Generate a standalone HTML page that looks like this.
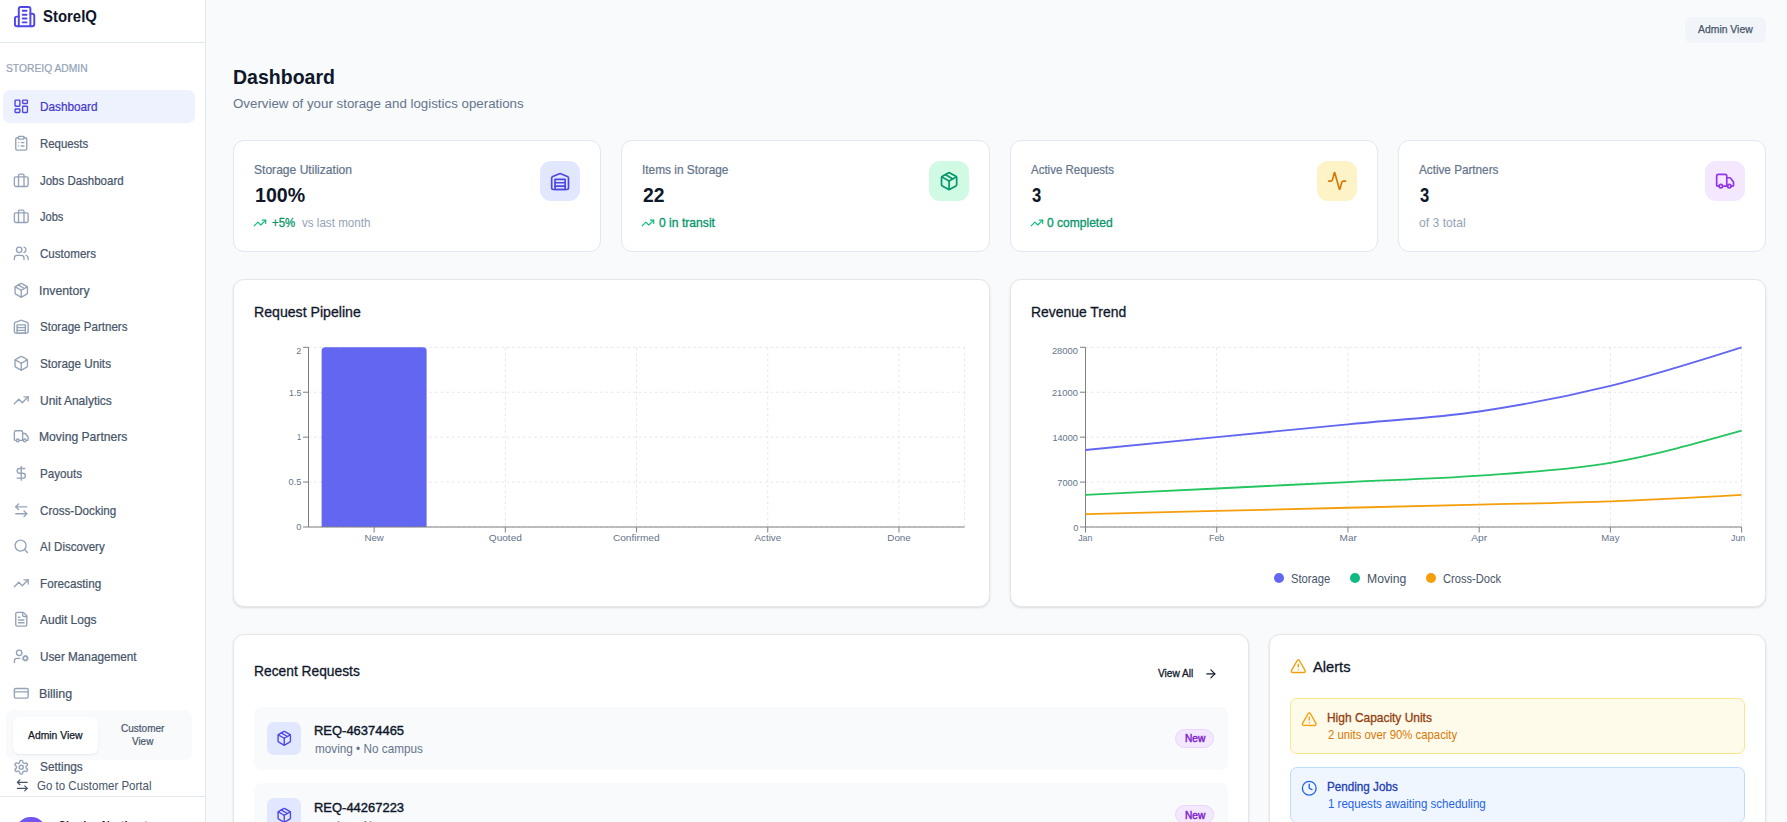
<!DOCTYPE html>
<html lang="en"><head><meta charset="utf-8"><title>StoreIQ - Dashboard</title>
<style>
*{box-sizing:content-box;margin:0;padding:0}
html,body{width:1787px;height:822px;overflow:hidden;background:#f8fafc;font-family:"Liberation Sans", sans-serif;}
body{position:relative}
.t{position:absolute;white-space:nowrap;line-height:1;display:block;transform-origin:0 50%;font-weight:400}
.ic{position:absolute;display:block;overflow:visible}
a{text-decoration:none;color:inherit}
button{border:0;background:none;font:inherit}
h1,h3,p{font:inherit}
ul{list-style:none}
.sb{position:absolute;left:0;top:0;height:822px;background:#fff;border-right:1px solid #e2e8f0;overflow:hidden;box-sizing:border-box}
.sbhead{position:absolute;left:0;top:0;width:100%;border-bottom:1px solid #e2e8f0}
.ni{position:absolute;display:block;border-radius:7px}
.ni.act{background:#eef2ff}
.switch{position:absolute;background:#f8fafc;border-radius:8px}
.switch button{position:absolute;border-radius:6px;display:block}
.swa{background:#fff;box-shadow:0 1px 2px rgba(15,23,42,.08)}
.sbfoot{position:absolute;left:0;border-top:1px solid #e2e8f0;height:60px}
.avatar{position:absolute;width:29.3px;height:29.3px;border-radius:50%;background:linear-gradient(135deg,#6366f1,#9333ea)}
main{position:absolute;left:0;top:0;width:1787px;height:822px}
.badge{position:absolute;background:#f1f5f9;border-radius:6px}
.card{position:absolute;background:#fff;border:1px solid #e2e8f0;border-radius:11px}
.card.sh{border-color:#e5e7ea;box-shadow:0 1px 2px rgba(0,0,0,.07),0 1px 3px rgba(0,0,0,.06)}
.ib{position:absolute;width:40px;height:40px;border-radius:11px}
.chart{position:absolute;left:0;top:0;display:block}
.dot{position:absolute;width:10.2px;height:10.2px;border-radius:50%;display:block}
.row{position:absolute;background:#f8fafc;border-radius:7px}
.rib{position:absolute;width:33.9px;height:33.1px;border-radius:7px;background:#e0e7ff}
.pill{position:absolute;border:1px solid #e9d5ff;background:#f3e8ff;border-radius:10px;display:block}
.alert{position:absolute;border-radius:7px;border:1px solid}
.alert.amber{background:#fffbeb;border-color:#fde68a}
.alert.blue{background:#eff6ff;border-color:#bfdbfe}
</style></head>
<body>
<main>
<div class="badge" style="left:1684.8px;top:16.9px;width:81.2px;height:25.8px"><span class="t" style="left:13.60px;top:7.14px;font-size:10.7px;color:#475569;transform:scaleX(0.9732);-webkit-text-stroke:0.25px #475569;">Admin View</span></div><h1><span class="t" style="left:233.21px;top:68.04px;font-size:19.8px;color:#0f172a;transform:scaleX(0.9868);font-weight:700;">Dashboard</span></h1><p><span class="t" style="left:233.40px;top:98.04px;font-size:12.5px;color:#64748b;transform:scaleX(1.0645);">Overview of your storage and logistics operations</span></p>
<section class="stats">
<div class="card" style="left:233px;top:140px;width:366px;height:110px">
<span class="t" style="left:20.10px;top:23.04px;font-size:12.4px;color:#64748b;transform:scaleX(0.9745);-webkit-text-stroke:0.22px #64748b;">Storage Utilization</span>
<span class="t" style="left:20.81px;top:45.04px;font-size:19.8px;color:#0f172a;transform:scaleX(0.9899);font-weight:700;">100%</span>
<svg class="ic" style="left:19.25px;top:74.75px" width="13.9" height="13.9" viewBox="0 0 24 24" fill="none" stroke="#10b981" stroke-width="2" stroke-linecap="round" stroke-linejoin="round"><polyline points="22 7 13.5 15.5 8.5 10.5 2 17"/><polyline points="16 7 22 7 22 13"/></svg>
<span class="t" style="left:37.90px;top:76.04px;font-size:12.4px;color:#059669;transform:scaleX(0.9193);-webkit-text-stroke:0.3px #059669;">+5%</span>
<span class="t" style="left:68.00px;top:76.04px;font-size:12.4px;color:#94a3b8;transform:scaleX(0.9370);">vs last month</span>
<div class="ib" style="left:306.00px;top:20.00px;background:#e0e7ff"><svg class="ic" style="left:9.90px;top:9.90px" width="20.2" height="20.2" viewBox="0 0 24 24" fill="none" stroke="#4f46e5" stroke-width="2" stroke-linecap="round" stroke-linejoin="round"><path d="M22 8.35V20a2 2 0 0 1-2 2H4a2 2 0 0 1-2-2V8.35A2 2 0 0 1 3.26 6.5l8-3.2a2 2 0 0 1 1.48 0l8 3.2A2 2 0 0 1 22 8.35Z"/><path d="M6 18h12"/><path d="M6 14h12"/><rect width="12" height="12" x="6" y="10"/></svg></div>
</div>
<div class="card" style="left:621px;top:140px;width:367px;height:110px">
<span class="t" style="left:19.94px;top:23.04px;font-size:12.4px;color:#64748b;transform:scaleX(0.9583);-webkit-text-stroke:0.22px #64748b;">Items in Storage</span>
<span class="t" style="left:20.90px;top:45.04px;font-size:19.8px;color:#0f172a;transform:scaleX(0.9772);font-weight:700;">22</span>
<svg class="ic" style="left:19.45px;top:74.75px" width="13.9" height="13.9" viewBox="0 0 24 24" fill="none" stroke="#10b981" stroke-width="2" stroke-linecap="round" stroke-linejoin="round"><polyline points="22 7 13.5 15.5 8.5 10.5 2 17"/><polyline points="16 7 22 7 22 13"/></svg>
<span class="t" style="left:37.10px;top:76.04px;font-size:12.4px;color:#059669;transform:scaleX(0.9789);-webkit-text-stroke:0.3px #059669;">0 in transit</span>
<div class="ib" style="left:307.00px;top:20.00px;background:#d1fae5"><svg class="ic" style="left:9.90px;top:9.90px" width="20.2" height="20.2" viewBox="0 0 24 24" fill="none" stroke="#059669" stroke-width="2" stroke-linecap="round" stroke-linejoin="round"><path d="m7.5 4.27 9 5.15"/><path d="M21 8a2 2 0 0 0-1-1.73l-7-4a2 2 0 0 0-2 0l-7 4A2 2 0 0 0 3 8v8a2 2 0 0 0 1 1.73l7 4a2 2 0 0 0 2 0l7-4A2 2 0 0 0 21 16Z"/><path d="m3.3 7 8.7 5 8.7-5"/><path d="M12 22V12"/></svg></div>
</div>
<div class="card" style="left:1010px;top:140px;width:366px;height:110px">
<span class="t" style="left:20.20px;top:23.04px;font-size:12.4px;color:#64748b;transform:scaleX(0.9269);-webkit-text-stroke:0.22px #64748b;">Active Requests</span>
<span class="t" style="left:20.75px;top:45.04px;font-size:19.8px;color:#0f172a;transform:scaleX(0.8409);font-weight:700;">3</span>
<svg class="ic" style="left:19.25px;top:74.75px" width="13.9" height="13.9" viewBox="0 0 24 24" fill="none" stroke="#10b981" stroke-width="2" stroke-linecap="round" stroke-linejoin="round"><polyline points="22 7 13.5 15.5 8.5 10.5 2 17"/><polyline points="16 7 22 7 22 13"/></svg>
<span class="t" style="left:36.40px;top:76.04px;font-size:12.4px;color:#059669;transform:scaleX(0.9717);-webkit-text-stroke:0.3px #059669;">0 completed</span>
<div class="ib" style="left:306.00px;top:20.00px;background:#fef3c7"><svg class="ic" style="left:9.90px;top:9.90px" width="20.2" height="20.2" viewBox="0 0 24 24" fill="none" stroke="#d97706" stroke-width="2" stroke-linecap="round" stroke-linejoin="round"><path d="M22 12h-2.48a2 2 0 0 0-1.93 1.46l-2.35 8.36a.25.25 0 0 1-.48 0L9.24 2.18a.25.25 0 0 0-.48 0l-2.35 8.36A2 2 0 0 1 4.49 12H2"/></svg></div>
</div>
<div class="card" style="left:1398px;top:140px;width:366px;height:110px">
<span class="t" style="left:20.20px;top:23.04px;font-size:12.4px;color:#64748b;transform:scaleX(0.9449);-webkit-text-stroke:0.22px #64748b;">Active Partners</span>
<span class="t" style="left:20.75px;top:45.04px;font-size:19.8px;color:#0f172a;transform:scaleX(0.8409);font-weight:700;">3</span>
<span class="t" style="left:20.40px;top:76.04px;font-size:12.4px;color:#94a3b8;transform:scaleX(0.9813);">of 3 total</span>
<div class="ib" style="left:306.00px;top:20.00px;background:#f3e8ff"><svg class="ic" style="left:9.90px;top:9.90px" width="20.2" height="20.2" viewBox="0 0 24 24" fill="none" stroke="#9333ea" stroke-width="2" stroke-linecap="round" stroke-linejoin="round"><path d="M14 18V6a2 2 0 0 0-2-2H4a2 2 0 0 0-2 2v11a1 1 0 0 0 1 1h2"/><path d="M15 18H9"/><path d="M19 18h2a1 1 0 0 0 1-1v-3.65a1 1 0 0 0-.22-.624l-3.48-4.35A1 1 0 0 0 17.52 8H14"/><circle cx="17" cy="18" r="2"/><circle cx="7" cy="18" r="2"/></svg></div>
</div>
</section>
<section class="charts">
<div class="card sh" style="left:233px;top:279px;width:755px;height:326px"><h3><span class="t" style="left:20.12px;top:25.04px;font-size:14.4px;color:#0f172a;transform:scaleX(0.9815);-webkit-text-stroke:0.3px #0f172a;">Request Pipeline</span></h3><svg class="chart" width="755" height="326" viewBox="234 280 755 326" font-family='"Liberation Sans", sans-serif'>
<g stroke="#e2e8f0" stroke-width="1" stroke-dasharray="2.75 2.75" fill="none">
<line x1="308.5" x2="964.6" y1="527.00" y2="527.00"/>
<line x1="308.5" x2="964.6" y1="482.07" y2="482.07"/>
<line x1="308.5" x2="964.6" y1="437.15" y2="437.15"/>
<line x1="308.5" x2="964.6" y1="392.23" y2="392.23"/>
<line x1="308.5" x2="964.6" y1="347.30" y2="347.30"/>
<line x1="308.50" x2="308.50" y1="347.3" y2="527.0"/>
<line x1="374.11" x2="374.11" y1="347.3" y2="527.0"/>
<line x1="505.33" x2="505.33" y1="347.3" y2="527.0"/>
<line x1="636.55" x2="636.55" y1="347.3" y2="527.0"/>
<line x1="767.77" x2="767.77" y1="347.3" y2="527.0"/>
<line x1="898.99" x2="898.99" y1="347.3" y2="527.0"/>
<line x1="964.60" x2="964.60" y1="347.3" y2="527.0"/>
</g>
<path fill="#6366f1" d="M321.62,350.97A3.67,3.67,0,0,1,325.29,347.3L422.93,347.3A3.67,3.67,0,0,1,426.60,350.97L426.60,527.0L321.62,527.0Z"/>
<g stroke="#7f7f7f" stroke-width="1" fill="none">
<line x1="308.5" x2="964.6" y1="527.0" y2="527.0"/><line x1="308.5" x2="308.5" y1="347.3" y2="527.0"/>
<line x1="374.11" x2="374.11" y1="527.0" y2="532.5"/>
<line x1="303.0" x2="308.5" y1="527.00" y2="527.00"/>
<line x1="505.33" x2="505.33" y1="527.0" y2="532.5"/>
<line x1="303.0" x2="308.5" y1="482.07" y2="482.07"/>
<line x1="636.55" x2="636.55" y1="527.0" y2="532.5"/>
<line x1="303.0" x2="308.5" y1="437.15" y2="437.15"/>
<line x1="767.77" x2="767.77" y1="527.0" y2="532.5"/>
<line x1="303.0" x2="308.5" y1="392.23" y2="392.23"/>
<line x1="898.99" x2="898.99" y1="527.0" y2="532.5"/>
<line x1="303.0" x2="308.5" y1="347.30" y2="347.30"/>
</g>
<text transform="translate(364.40,541) scale(1.0324,1)" font-size="9.4" fill="#64748b">New</text>
<text transform="translate(488.80,541) scale(1.0740,1)" font-size="9.4" fill="#64748b">Quoted</text>
<text transform="translate(612.90,541) scale(1.0783,1)" font-size="9.4" fill="#64748b">Confirmed</text>
<text transform="translate(754.45,541) scale(1.0468,1)" font-size="9.4" fill="#64748b">Active</text>
<text transform="translate(887.30,541) scale(1.0451,1)" font-size="9.4" fill="#64748b">Done</text>
<text transform="translate(296.20,530) scale(0.9800,1)" font-size="9.4" fill="#64748b">0</text>
<text transform="translate(288.54,485) scale(0.9800,1)" font-size="9.4" fill="#64748b">0.5</text>
<text transform="translate(297.10,440) scale(0.8000,1)" font-size="9.4" fill="#64748b">1</text>
<text transform="translate(289.10,396) scale(0.9361,1)" font-size="9.4" fill="#64748b">1.5</text>
<text transform="translate(296.30,354) scale(0.9600,1)" font-size="9.4" fill="#64748b">2</text>
</svg></div>
<div class="card sh" style="left:1010px;top:279px;width:754px;height:326px"><h3><span class="t" style="left:19.63px;top:25.04px;font-size:14.4px;color:#0f172a;transform:scaleX(0.9666);-webkit-text-stroke:0.3px #0f172a;">Revenue Trend</span></h3><svg class="chart" width="754" height="326" viewBox="1011 280 754 326" font-family='"Liberation Sans", sans-serif'>
<g stroke="#e2e8f0" stroke-width="1" stroke-dasharray="2.75 2.75" fill="none">
<line x1="1085.5" x2="1741.6" y1="527.00" y2="527.00"/>
<line x1="1085.5" x2="1741.6" y1="482.07" y2="482.07"/>
<line x1="1085.5" x2="1741.6" y1="437.15" y2="437.15"/>
<line x1="1085.5" x2="1741.6" y1="392.23" y2="392.23"/>
<line x1="1085.5" x2="1741.6" y1="347.30" y2="347.30"/>
<line x1="1085.50" x2="1085.50" y1="347.3" y2="527.0"/>
<line x1="1216.72" x2="1216.72" y1="347.3" y2="527.0"/>
<line x1="1347.94" x2="1347.94" y1="347.3" y2="527.0"/>
<line x1="1479.16" x2="1479.16" y1="347.3" y2="527.0"/>
<line x1="1610.38" x2="1610.38" y1="347.3" y2="527.0"/>
<line x1="1741.60" x2="1741.60" y1="347.3" y2="527.0"/>
</g>
<g stroke="#7f7f7f" stroke-width="1" fill="none">
<line x1="1085.5" x2="1741.6" y1="527.0" y2="527.0"/><line x1="1085.5" x2="1085.5" y1="347.3" y2="527.0"/>
<line x1="1085.50" x2="1085.50" y1="527.0" y2="532.5"/>
<line x1="1216.72" x2="1216.72" y1="527.0" y2="532.5"/>
<line x1="1347.94" x2="1347.94" y1="527.0" y2="532.5"/>
<line x1="1479.16" x2="1479.16" y1="527.0" y2="532.5"/>
<line x1="1610.38" x2="1610.38" y1="527.0" y2="532.5"/>
<line x1="1741.60" x2="1741.60" y1="527.0" y2="532.5"/>
<line x1="1080.0" x2="1085.5" y1="527.00" y2="527.00"/>
<line x1="1080.0" x2="1085.5" y1="482.07" y2="482.07"/>
<line x1="1080.0" x2="1085.5" y1="437.15" y2="437.15"/>
<line x1="1080.0" x2="1085.5" y1="392.23" y2="392.23"/>
<line x1="1080.0" x2="1085.5" y1="347.30" y2="347.30"/>
</g>
<path d="M1085.50,449.99C1129.24,445.71,1172.98,441.43,1216.72,437.15C1260.46,432.87,1304.20,428.59,1347.94,424.31C1391.68,420.04,1435.42,417.90,1479.16,411.48C1522.90,405.06,1566.64,396.50,1610.38,385.81C1654.12,375.11,1697.86,361.21,1741.60,347.30" fill="none" stroke="#6366f1" stroke-width="1.83"/>
<path d="M1085.50,494.91C1129.24,492.77,1172.98,490.63,1216.72,488.49C1260.46,486.35,1304.20,484.21,1347.94,482.07C1391.68,479.94,1435.42,478.87,1479.16,475.66C1522.90,472.45,1566.64,470.31,1610.38,462.82C1654.12,455.33,1697.86,443.03,1741.60,430.73" fill="none" stroke="#22c55e" stroke-width="1.83"/>
<path d="M1085.50,514.16C1129.24,513.09,1172.98,512.02,1216.72,510.96C1260.46,509.89,1304.20,508.82,1347.94,507.75C1391.68,506.68,1435.42,505.61,1479.16,504.54C1522.90,503.47,1566.64,502.93,1610.38,501.33C1654.12,499.72,1697.86,497.32,1741.60,494.91" fill="none" stroke="#f59e0b" stroke-width="1.83"/>
<text transform="translate(1078.15,541) scale(0.9462,1)" font-size="9.4" fill="#64748b">Jan</text>
<text transform="translate(1208.95,541) scale(0.9473,1)" font-size="9.4" fill="#64748b">Feb</text>
<text transform="translate(1339.60,541) scale(1.0609,1)" font-size="9.4" fill="#64748b">Mar</text>
<text transform="translate(1471.20,541) scale(1.0921,1)" font-size="9.4" fill="#64748b">Apr</text>
<text transform="translate(1601.25,541) scale(1.0264,1)" font-size="9.4" fill="#64748b">May</text>
<text transform="translate(1731.05,541) scale(0.9328,1)" font-size="9.4" fill="#64748b">Jun</text>
<text transform="translate(1073.30,531) scale(0.9800,1)" font-size="9.4" fill="#64748b">0</text>
<text transform="translate(1057.37,486) scale(0.9800,1)" font-size="9.4" fill="#64748b">7000</text>
<text transform="translate(1052.40,441) scale(0.9746,1)" font-size="9.4" fill="#64748b">14000</text>
<text transform="translate(1051.90,396) scale(0.9940,1)" font-size="9.4" fill="#64748b">21000</text>
<text transform="translate(1051.90,354) scale(0.9940,1)" font-size="9.4" fill="#64748b">28000</text>
</svg><ul class="legend"><li><i class="dot" style="left:262.90px;top:292.80px;background:#6366f1"></i><span class="t" style="left:280.00px;top:293.04px;font-size:12.4px;color:#475569;transform:scaleX(0.9056);">Storage</span></li><li><i class="dot" style="left:338.90px;top:292.80px;background:#10b981"></i><span class="t" style="left:355.62px;top:293.04px;font-size:12.4px;color:#475569;transform:scaleX(0.9833);">Moving</span></li><li><i class="dot" style="left:415.00px;top:292.80px;background:#f59e0b"></i><span class="t" style="left:432.20px;top:293.04px;font-size:12.4px;color:#475569;transform:scaleX(0.8975);">Cross-Dock</span></li></ul></div>
</section>
<section class="bottom">
<div class="card sh" style="left:233px;top:634px;width:1014px;height:260px"><h3><span class="t" style="left:20.04px;top:29.04px;font-size:14.4px;color:#0f172a;transform:scaleX(0.9588);-webkit-text-stroke:0.3px #0f172a;">Recent Requests</span></h3>
<a class="va"><span class="t" style="left:924.20px;top:33.04px;font-size:10.7px;color:#0f172a;transform:scaleX(0.9481);-webkit-text-stroke:0.3px #0f172a;">View All</span><svg class="ic" style="left:969.62px;top:31.73px" width="13.75" height="13.75" viewBox="0 0 24 24" fill="none" stroke="#0f172a" stroke-width="2" stroke-linecap="round" stroke-linejoin="round"><path d="M5 12h14"/><path d="m12 5 7 7-7 7"/></svg></a>
<div class="row" style="left:20.00px;top:72.00px;width:973.80px;height:62.7px"><div class="rib" style="left:13.00px;top:14.90px"><svg class="ic" style="left:8.95px;top:8.15px" width="16.5" height="16.5" viewBox="0 0 24 24" fill="none" stroke="#4f46e5" stroke-width="2" stroke-linecap="round" stroke-linejoin="round"><path d="m7.5 4.27 9 5.15"/><path d="M21 8a2 2 0 0 0-1-1.73l-7-4a2 2 0 0 0-2 0l-7 4A2 2 0 0 0 3 8v8a2 2 0 0 0 1 1.73l7 4a2 2 0 0 0 2 0l7-4A2 2 0 0 0 21 16Z"/><path d="m3.3 7 8.7 5 8.7-5"/><path d="M12 22V12"/></svg></div><span class="t" style="left:59.87px;top:18.04px;font-size:12.6px;color:#0f172a;transform:scaleX(1.0288);-webkit-text-stroke:0.4px #0f172a;">REQ-46374465</span><span class="t" style="left:60.90px;top:36.04px;font-size:12.4px;color:#64748b;transform:scaleX(0.9477);">moving • No campus</span><span class="pill" style="left:920.90px;top:21.90px;width:37.2px;height:17px"><span class="t" style="left:8.95px;top:4.14px;font-size:10.4px;color:#7e22ce;transform:scaleX(0.9726);-webkit-text-stroke:0.45px #7e22ce;">New</span></span></div>
<div class="row" style="left:20.00px;top:147.80px;width:973.80px;height:62.7px"><div class="rib" style="left:13.00px;top:15.70px"><svg class="ic" style="left:8.95px;top:8.15px" width="16.5" height="16.5" viewBox="0 0 24 24" fill="none" stroke="#4f46e5" stroke-width="2" stroke-linecap="round" stroke-linejoin="round"><path d="m7.5 4.27 9 5.15"/><path d="M21 8a2 2 0 0 0-1-1.73l-7-4a2 2 0 0 0-2 0l-7 4A2 2 0 0 0 3 8v8a2 2 0 0 0 1 1.73l7 4a2 2 0 0 0 2 0l7-4A2 2 0 0 0 21 16Z"/><path d="m3.3 7 8.7 5 8.7-5"/><path d="M12 22V12"/></svg></div><span class="t" style="left:59.87px;top:19.24px;font-size:12.6px;color:#0f172a;transform:scaleX(1.0288);-webkit-text-stroke:0.4px #0f172a;">REQ-44267223</span><span class="t" style="left:60.90px;top:37.24px;font-size:12.4px;color:#64748b;transform:scaleX(0.9477);">moving • No campus</span><span class="pill" style="left:920.90px;top:22.70px;width:37.2px;height:17px"><span class="t" style="left:8.95px;top:4.54px;font-size:10.4px;color:#7e22ce;transform:scaleX(0.9726);-webkit-text-stroke:0.45px #7e22ce;">New</span></span></div>
</div>
<div class="card sh" style="left:1269px;top:634px;width:495px;height:260px"><svg class="ic" style="left:20.10px;top:23.00px" width="16.6" height="16.6" viewBox="0 0 24 24" fill="none" stroke="#f59e0b" stroke-width="2" stroke-linecap="round" stroke-linejoin="round"><path d="m21.73 18-8-14a2 2 0 0 0-3.48 0l-8 14A2 2 0 0 0 4 21h16a2 2 0 0 0 1.73-3Z"/><path d="M12 9v4"/><path d="M12 17h.01"/></svg><h3><span class="t" style="left:43.20px;top:25.04px;font-size:14.4px;color:#0f172a;transform:scaleX(1.0194);-webkit-text-stroke:0.3px #0f172a;">Alerts</span></h3>
<div class="alert amber" style="left:20.00px;top:63.00px;width:453.00px;height:54px"><svg class="ic" style="left:10.15px;top:12.15px" width="16.5" height="16.5" viewBox="0 0 24 24" fill="none" stroke="#f59e0b" stroke-width="2" stroke-linecap="round" stroke-linejoin="round"><path d="m21.73 18-8-14a2 2 0 0 0-3.48 0l-8 14A2 2 0 0 0 4 21h16a2 2 0 0 0 1.73-3Z"/><path d="M12 9v4"/><path d="M12 17h.01"/></svg><span class="t" style="left:35.54px;top:13.04px;font-size:12.4px;color:#92400e;transform:scaleX(0.9637);-webkit-text-stroke:0.3px #92400e;">High Capacity Units</span><span class="t" style="left:36.80px;top:30.04px;font-size:12.4px;color:#d97706;transform:scaleX(0.9148);">2 units over 90% capacity</span></div>
<div class="alert blue" style="left:20.00px;top:132.00px;width:453.00px;height:54px"><svg class="ic" style="left:9.95px;top:11.85px" width="16.5" height="16.5" viewBox="0 0 24 24" fill="none" stroke="#2563eb" stroke-width="2" stroke-linecap="round" stroke-linejoin="round"><circle cx="12" cy="12" r="10"/><polyline points="12 6 12 12 16 14"/></svg><span class="t" style="left:35.56px;top:13.04px;font-size:12.4px;color:#1e40af;transform:scaleX(0.9419);-webkit-text-stroke:0.3px #1e40af;">Pending Jobs</span><span class="t" style="left:36.80px;top:30.04px;font-size:12.4px;color:#2563eb;transform:scaleX(0.9307);">1 requests awaiting scheduling</span></div>
</div></section>
</main>
<aside class="sb" style="width:206px">
<div class="sbhead" style="height:42px"><svg class="ic" style="left:12.80px;top:4.70px" width="23.2" height="23.2" viewBox="0 0 24 24" fill="none" stroke="#4f46e5" stroke-width="2" stroke-linecap="round" stroke-linejoin="round"><path d="M6 22V4a2 2 0 0 1 2-2h8a2 2 0 0 1 2 2v18Z"/><path d="M6 12H4a2 2 0 0 0-2 2v6a2 2 0 0 0 2 2h2"/><path d="M18 9h2a2 2 0 0 1 2 2v9a2 2 0 0 1-2 2h-2"/><path d="M10 6h4"/><path d="M10 10h4"/><path d="M10 14h4"/><path d="M10 18h4"/></svg><span class="t" style="left:43.10px;top:9.04px;font-size:15.9px;color:#0f172a;transform:scaleX(0.9398);font-weight:700;">StoreIQ</span></div>
<div class="sect"><span class="t" style="left:6.40px;top:64.04px;font-size:10.0px;color:#94a3b8;transform:scaleX(1.0301);-webkit-text-stroke:0.2px #94a3b8;">STOREIQ ADMIN</span></div>
<nav>
<a class="ni act" style="left:3px;top:89.80px;width:192.2px;height:33.2px"><svg class="ic" style="left:10.10px;top:8.20px" width="16.5" height="16.5" viewBox="0 0 24 24" fill="none" stroke="#4f46e5" stroke-width="2" stroke-linecap="round" stroke-linejoin="round"><rect width="7" height="9" x="3" y="3" rx="1"/><rect width="7" height="5" x="14" y="3" rx="1"/><rect width="7" height="9" x="14" y="12" rx="1"/><rect width="7" height="5" x="3" y="16" rx="1"/></svg><span class="t" style="left:36.50px;top:11.24px;font-size:12.4px;color:#4338ca;transform:scaleX(0.9494);-webkit-text-stroke:0.22px #4338ca;">Dashboard</span></a>
<a class="ni" style="left:3px;top:126.47px;width:192.2px;height:33.2px"><svg class="ic" style="left:10.10px;top:8.53px" width="16.5" height="16.5" viewBox="0 0 24 24" fill="none" stroke="#94a3b8" stroke-width="2" stroke-linecap="round" stroke-linejoin="round"><rect width="8" height="4" x="8" y="2" rx="1" ry="1"/><path d="M16 4h2a2 2 0 0 1 2 2v14a2 2 0 0 1-2 2H6a2 2 0 0 1-2-2V6a2 2 0 0 1 2-2h2"/><path d="M12 11h4"/><path d="M12 16h4"/><path d="M8 11h.01"/><path d="M8 16h.01"/></svg><span class="t" style="left:36.53px;top:11.57px;font-size:12.4px;color:#475569;transform:scaleX(0.9208);-webkit-text-stroke:0.22px #475569;">Requests</span></a>
<a class="ni" style="left:3px;top:163.13px;width:192.2px;height:33.2px"><svg class="ic" style="left:10.10px;top:8.87px" width="16.5" height="16.5" viewBox="0 0 24 24" fill="none" stroke="#94a3b8" stroke-width="2" stroke-linecap="round" stroke-linejoin="round"><rect width="20" height="14" x="2" y="7" rx="2" ry="2"/><path d="M16 21V5a2 2 0 0 0-2-2h-4a2 2 0 0 0-2 2v16"/></svg><span class="t" style="left:37.45px;top:11.91px;font-size:12.4px;color:#475569;transform:scaleX(0.9265);-webkit-text-stroke:0.22px #475569;">Jobs Dashboard</span></a>
<a class="ni" style="left:3px;top:199.80px;width:192.2px;height:33.2px"><svg class="ic" style="left:10.10px;top:8.20px" width="16.5" height="16.5" viewBox="0 0 24 24" fill="none" stroke="#94a3b8" stroke-width="2" stroke-linecap="round" stroke-linejoin="round"><rect width="20" height="14" x="2" y="7" rx="2" ry="2"/><path d="M16 21V5a2 2 0 0 0-2-2h-4a2 2 0 0 0-2 2v16"/></svg><span class="t" style="left:37.45px;top:11.24px;font-size:12.4px;color:#475569;transform:scaleX(0.8892);-webkit-text-stroke:0.22px #475569;">Jobs</span></a>
<a class="ni" style="left:3px;top:236.47px;width:192.2px;height:33.2px"><svg class="ic" style="left:10.10px;top:8.53px" width="16.5" height="16.5" viewBox="0 0 24 24" fill="none" stroke="#94a3b8" stroke-width="2" stroke-linecap="round" stroke-linejoin="round"><path d="M16 21v-2a4 4 0 0 0-4-4H6a4 4 0 0 0-4 4v2"/><circle cx="9" cy="7" r="4"/><path d="M22 21v-2a4 4 0 0 0-3-3.87"/><path d="M16 3.13a4 4 0 0 1 0 7.75"/></svg><span class="t" style="left:37.45px;top:11.57px;font-size:12.4px;color:#475569;transform:scaleX(0.9346);-webkit-text-stroke:0.22px #475569;">Customers</span></a>
<a class="ni" style="left:3px;top:273.13px;width:192.2px;height:33.2px"><svg class="ic" style="left:10.10px;top:8.87px" width="16.5" height="16.5" viewBox="0 0 24 24" fill="none" stroke="#94a3b8" stroke-width="2" stroke-linecap="round" stroke-linejoin="round"><path d="m7.5 4.27 9 5.15"/><path d="M21 8a2 2 0 0 0-1-1.73l-7-4a2 2 0 0 0-2 0l-7 4A2 2 0 0 0 3 8v8a2 2 0 0 0 1 1.73l7 4a2 2 0 0 0 2 0l7-4A2 2 0 0 0 21 16Z"/><path d="m3.3 7 8.7 5 8.7-5"/><path d="M12 22V12"/></svg><span class="t" style="left:36.46px;top:11.91px;font-size:12.4px;color:#475569;transform:scaleX(0.9927);-webkit-text-stroke:0.22px #475569;">Inventory</span></a>
<a class="ni" style="left:3px;top:309.80px;width:192.2px;height:33.2px"><svg class="ic" style="left:10.10px;top:8.20px" width="16.5" height="16.5" viewBox="0 0 24 24" fill="none" stroke="#94a3b8" stroke-width="2" stroke-linecap="round" stroke-linejoin="round"><path d="M22 8.35V20a2 2 0 0 1-2 2H4a2 2 0 0 1-2-2V8.35A2 2 0 0 1 3.26 6.5l8-3.2a2 2 0 0 1 1.48 0l8 3.2A2 2 0 0 1 22 8.35Z"/><path d="M6 18h12"/><path d="M6 14h12"/><rect width="12" height="12" x="6" y="10"/></svg><span class="t" style="left:37.45px;top:11.24px;font-size:12.4px;color:#475569;transform:scaleX(0.9340);-webkit-text-stroke:0.22px #475569;">Storage Partners</span></a>
<a class="ni" style="left:3px;top:346.47px;width:192.2px;height:33.2px"><svg class="ic" style="left:10.10px;top:8.53px" width="16.5" height="16.5" viewBox="0 0 24 24" fill="none" stroke="#94a3b8" stroke-width="2" stroke-linecap="round" stroke-linejoin="round"><path d="M21 8a2 2 0 0 0-1-1.73l-7-4a2 2 0 0 0-2 0l-7 4A2 2 0 0 0 3 8v8a2 2 0 0 0 1 1.73l7 4a2 2 0 0 0 2 0l7-4A2 2 0 0 0 21 16Z"/><path d="m3.3 7 8.7 5 8.7-5"/><path d="M12 22V12"/></svg><span class="t" style="left:37.45px;top:11.57px;font-size:12.4px;color:#475569;transform:scaleX(0.9456);-webkit-text-stroke:0.22px #475569;">Storage Units</span></a>
<a class="ni" style="left:3px;top:383.14px;width:192.2px;height:33.2px"><svg class="ic" style="left:10.10px;top:8.86px" width="16.5" height="16.5" viewBox="0 0 24 24" fill="none" stroke="#94a3b8" stroke-width="2" stroke-linecap="round" stroke-linejoin="round"><polyline points="22 7 13.5 15.5 8.5 10.5 2 17"/><polyline points="16 7 22 7 22 13"/></svg><span class="t" style="left:37.45px;top:11.90px;font-size:12.4px;color:#475569;transform:scaleX(0.9658);-webkit-text-stroke:0.22px #475569;">Unit Analytics</span></a>
<a class="ni" style="left:3px;top:419.80px;width:192.2px;height:33.2px"><svg class="ic" style="left:10.10px;top:8.20px" width="16.5" height="16.5" viewBox="0 0 24 24" fill="none" stroke="#94a3b8" stroke-width="2" stroke-linecap="round" stroke-linejoin="round"><path d="M14 18V6a2 2 0 0 0-2-2H4a2 2 0 0 0-2 2v11a1 1 0 0 0 1 1h2"/><path d="M15 18H9"/><path d="M19 18h2a1 1 0 0 0 1-1v-3.65a1 1 0 0 0-.22-.624l-3.48-4.35A1 1 0 0 0 17.52 8H14"/><circle cx="17" cy="18" r="2"/><circle cx="7" cy="18" r="2"/></svg><span class="t" style="left:36.47px;top:11.24px;font-size:12.4px;color:#475569;transform:scaleX(0.9796);-webkit-text-stroke:0.22px #475569;">Moving Partners</span></a>
<a class="ni" style="left:3px;top:456.47px;width:192.2px;height:33.2px"><svg class="ic" style="left:10.10px;top:8.53px" width="16.5" height="16.5" viewBox="0 0 24 24" fill="none" stroke="#94a3b8" stroke-width="2" stroke-linecap="round" stroke-linejoin="round"><line x1="12" x2="12" y1="2" y2="22"/><path d="M17 5H9.5a3.5 3.5 0 0 0 0 7h5a3.5 3.5 0 0 1 0 7H6"/></svg><span class="t" style="left:36.51px;top:11.57px;font-size:12.4px;color:#475569;transform:scaleX(0.9386);-webkit-text-stroke:0.22px #475569;">Payouts</span></a>
<a class="ni" style="left:3px;top:493.14px;width:192.2px;height:33.2px"><svg class="ic" style="left:10.10px;top:8.86px" width="16.5" height="16.5" viewBox="0 0 24 24" fill="none" stroke="#94a3b8" stroke-width="2" stroke-linecap="round" stroke-linejoin="round"><path d="M8 3 4 7l4 4"/><path d="M4 7h16"/><path d="m16 21 4-4-4-4"/><path d="M20 17H4"/></svg><span class="t" style="left:37.45px;top:11.90px;font-size:12.4px;color:#475569;transform:scaleX(0.9379);-webkit-text-stroke:0.22px #475569;">Cross-Docking</span></a>
<a class="ni" style="left:3px;top:529.80px;width:192.2px;height:33.2px"><svg class="ic" style="left:10.10px;top:8.20px" width="16.5" height="16.5" viewBox="0 0 24 24" fill="none" stroke="#94a3b8" stroke-width="2" stroke-linecap="round" stroke-linejoin="round"><circle cx="11" cy="11" r="8"/><path d="m21 21-4.3-4.3"/></svg><span class="t" style="left:37.45px;top:11.24px;font-size:12.4px;color:#475569;transform:scaleX(0.9297);-webkit-text-stroke:0.22px #475569;">AI Discovery</span></a>
<a class="ni" style="left:3px;top:566.47px;width:192.2px;height:33.2px"><svg class="ic" style="left:10.10px;top:8.53px" width="16.5" height="16.5" viewBox="0 0 24 24" fill="none" stroke="#94a3b8" stroke-width="2" stroke-linecap="round" stroke-linejoin="round"><polyline points="22 7 13.5 15.5 8.5 10.5 2 17"/><polyline points="16 7 22 7 22 13"/></svg><span class="t" style="left:36.51px;top:11.57px;font-size:12.4px;color:#475569;transform:scaleX(0.9445);-webkit-text-stroke:0.22px #475569;">Forecasting</span></a>
<a class="ni" style="left:3px;top:603.14px;width:192.2px;height:33.2px"><svg class="ic" style="left:10.10px;top:7.86px" width="16.5" height="16.5" viewBox="0 0 24 24" fill="none" stroke="#94a3b8" stroke-width="2" stroke-linecap="round" stroke-linejoin="round"><path d="M15 2H6a2 2 0 0 0-2 2v16a2 2 0 0 0 2 2h12a2 2 0 0 0 2-2V7Z"/><path d="M14 2v4a2 2 0 0 0 2 2h4"/><path d="M10 9H8"/><path d="M16 13H8"/><path d="M16 17H8"/></svg><span class="t" style="left:37.45px;top:10.90px;font-size:12.4px;color:#475569;transform:scaleX(0.9665);-webkit-text-stroke:0.22px #475569;">Audit Logs</span></a>
<a class="ni" style="left:3px;top:639.80px;width:192.2px;height:33.2px"><svg class="ic" style="left:10.10px;top:8.20px" width="16.5" height="16.5" viewBox="0 0 24 24" fill="none" stroke="#94a3b8" stroke-width="2" stroke-linecap="round" stroke-linejoin="round"><circle cx="18" cy="15" r="3"/><circle cx="9" cy="7" r="4"/><path d="M10 15H6a4 4 0 0 0-4 4v2"/><path d="m21.7 16.4-.9-.3"/><path d="m15.2 13.9-.9-.3"/><path d="m16.6 18.7.3-.9"/><path d="m19.1 12.2.3-.9"/><path d="m19.6 18.7-.4-1"/><path d="m16.8 12.3-.4-1"/><path d="m14.3 16.6 1-.4"/><path d="m20.7 13.8 1-.4"/></svg><span class="t" style="left:37.45px;top:11.24px;font-size:12.4px;color:#475569;transform:scaleX(0.9475);-webkit-text-stroke:0.22px #475569;">User Management</span></a>
<a class="ni" style="left:3px;top:676.47px;width:192.2px;height:33.2px"><svg class="ic" style="left:10.10px;top:8.53px" width="16.5" height="16.5" viewBox="0 0 24 24" fill="none" stroke="#94a3b8" stroke-width="2" stroke-linecap="round" stroke-linejoin="round"><rect width="20" height="14" x="2" y="5" rx="2"/><line x1="2" x2="22" y1="10" y2="10"/></svg><span class="t" style="left:36.45px;top:11.57px;font-size:12.4px;color:#475569;transform:scaleX(1.0041);-webkit-text-stroke:0.22px #475569;">Billing</span></a>
</nav>
<div class="switch" style="left:5.8px;top:710px;width:186.2px;height:49.7px"><button class="swa" style="left:7px;top:6.8px;width:85px;height:37px"><span class="t" style="left:15.20px;top:13.24px;font-size:10.6px;color:#0f172a;transform:scaleX(0.9770);-webkit-text-stroke:0.25px #0f172a;">Admin View</span></button><button class="swc" style="left:96px;top:6.8px;width:85px;height:37px"><span class="t" style="left:19.40px;top:6.24px;font-size:10.6px;color:#475569;transform:scaleX(0.9442);-webkit-text-stroke:0.2px #475569;">Customer</span><span class="t" style="left:30.60px;top:19.24px;font-size:10.6px;color:#475569;transform:scaleX(0.9343);-webkit-text-stroke:0.2px #475569;">View</span></button></div>
<a class="ni" style="left:3px;top:753px;width:192px;height:28px"><svg class="ic" style="left:9.85px;top:5.75px" width="16.5" height="16.5" viewBox="0 0 24 24" fill="none" stroke="#94a3b8" stroke-width="2" stroke-linecap="round" stroke-linejoin="round"><path d="M12.22 2h-.44a2 2 0 0 0-2 2v.18a2 2 0 0 1-1 1.73l-.43.25a2 2 0 0 1-2 0l-.15-.08a2 2 0 0 0-2.73.73l-.22.38a2 2 0 0 0 .73 2.73l.15.1a2 2 0 0 1 1 1.72v.51a2 2 0 0 1-1 1.74l-.15.09a2 2 0 0 0-.73 2.73l.22.38a2 2 0 0 0 2.73.73l.15-.08a2 2 0 0 1 2 0l.43.25a2 2 0 0 1 1 1.73V20a2 2 0 0 0 2 2h.44a2 2 0 0 0 2-2v-.18a2 2 0 0 1 1-1.73l.43-.25a2 2 0 0 1 2 0l.15.08a2 2 0 0 0 2.73-.73l.22-.39a2 2 0 0 0-.73-2.73l-.15-.08a2 2 0 0 1-1-1.74v-.5a2 2 0 0 1 1-1.74l.15-.09a2 2 0 0 0 .73-2.73l-.22-.38a2 2 0 0 0-2.73-.73l-.15.08a2 2 0 0 1-2 0l-.43-.25a2 2 0 0 1-1-1.73V4a2 2 0 0 0-2-2z"/><circle cx="12" cy="12" r="3"/></svg><span class="t" style="left:37.20px;top:8.04px;font-size:12.4px;color:#475569;transform:scaleX(0.9557);-webkit-text-stroke:0.22px #475569;">Settings</span></a>
<a class="ni" style="left:3px;top:778px;width:192px;height:16px"><svg class="ic" style="left:12.16px;top:0.16px" width="14.67" height="14.67" viewBox="0 0 24 24" fill="none" stroke="#475569" stroke-width="2" stroke-linecap="round" stroke-linejoin="round"><path d="M8 3 4 7l4 4"/><path d="M4 7h16"/><path d="m16 21 4-4-4-4"/><path d="M20 17H4"/></svg><span class="t" style="left:33.60px;top:2.04px;font-size:12.4px;color:#475569;transform:scaleX(0.9289);">Go to Customer Portal</span></a>
<div class="sbfoot" style="top:796px;width:205px"><div class="avatar" style="left:16.4px;top:19.8px"></div><span class="t" style="left:58.40px;top:23.04px;font-size:12.4px;color:#0f172a;transform:scaleX(0.8929);font-weight:700;">Charles Northcote</span></div>
</aside>
</body></html>
